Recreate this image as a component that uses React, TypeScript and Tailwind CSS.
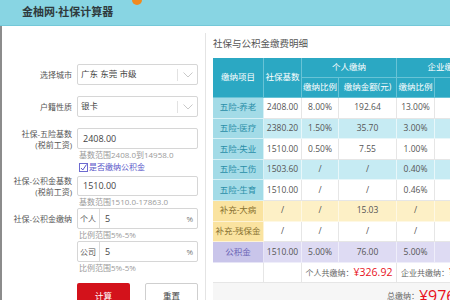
import React from "react";

const font = "font-['Open_Sans','Noto_Sans_CJK_SC',sans-serif]";

type Row = {
  name: string;
  kind: "wx" | "bc" | "gjj";
  alt: boolean;
  cells: string[];
};

// last column (企业缴纳金额) is cut off by the window, so it stays blank
const rows: Row[] = [
  { name: "五险-养老", kind: "wx", alt: false, cells: ["2408.00", "8.00%", "192.64", "13.00%", ""] },
  { name: "五险-医疗", kind: "wx", alt: true, cells: ["2380.20", "1.50%", "35.70", "3.00%", ""] },
  { name: "五险-失业", kind: "wx", alt: false, cells: ["1510.00", "0.50%", "7.55", "1.00%", ""] },
  { name: "五险-工伤", kind: "wx", alt: true, cells: ["1503.60", "/", "/", "0.40%", ""] },
  { name: "五险-生育", kind: "wx", alt: false, cells: ["1510.00", "/", "/", "0.46%", ""] },
  { name: "补充-大病", kind: "bc", alt: true, cells: ["/", "/", "15.03", "/", ""] },
  { name: "补充-残保金", kind: "bc", alt: false, cells: ["/", "/", "/", "/", ""] },
  { name: "公积金", kind: "gjj", alt: true, cells: ["1510.00", "5.00%", "76.00", "5.00%", ""] },
];

const nameCell = {
  wx: "bg-[#a3dbe7] text-[#2a8ea7] border-[#d8f1f6]",
  bc: "bg-[#fae3a0] text-[#87702f] border-[#fdf3d6]",
  gjj: "bg-[#c9c5ea] text-[#6a63b5] border-[#e6e4f6]",
};

const rowBg = (r: Row) => {
  if (!r.alt) return "bg-white border-[#e6e6e6]";
  if (r.kind === "wx") return "bg-[#c6ebf3] border-[#e8f7fa]";
  if (r.kind === "bc") return "bg-[#fdf0c6] border-[#fef8e4]";
  return "bg-[#dedbf3] border-[#efeefa]";
};

const Label = ({ children }: { children: React.ReactNode }) => (
  <div className="w-[70px] shrink-0 text-right text-[8px] leading-[11px] text-[#555]">{children}</div>
);

const Hint = ({ children }: { children: React.ReactNode }) => (
  <div className="pl-[77px] h-[12px] text-[8px] leading-[12px] text-[#9a9a9a]">{children}</div>
);

const Select = ({ value }: { value: string }) => (
  <div className="ml-[5px] w-[121px] h-full border border-[#d6d6d6] rounded-[2px] flex items-center pl-[3px] text-[8.5px] text-[#444]">
    <span className="flex-1">{value}</span>
    <span className="w-px h-[12px] bg-[#e2e2e2]" />
    <svg className="ml-[5px] mr-[4px]" width="10" height="6" viewBox="0 0 10 6">
      <path d="M0.5 0.5 L5 5 L9.5 0.5" fill="none" stroke="#c9c9c9" strokeWidth="1" />
    </svg>
  </div>
);

const Input = ({ value }: { value: string }) => (
  <div className="ml-[5px] w-[121px] h-full border border-[#d6d6d6] rounded-[2px] flex items-center pl-[5px] text-[9px] text-[#444]">
    {value}
  </div>
);

const RateInput = ({ prefix, value }: { prefix: string; value: string }) => (
  <div className="ml-[5px] w-[121px] h-full border border-[#d6d6d6] rounded-[2px] flex items-center text-[9px] text-[#444]">
    <span className="w-[22px] h-full flex items-center pl-[2px] text-[8px] text-[#555] border-r border-[#dcdcdc]">{prefix}</span>
    <span className="flex-1 pl-[5px]">{value}</span>
    <span className="pr-[4px] text-[8px] text-[#777]">%</span>
  </div>
);

const LeftForm = () => (
  <div className="w-[203px] shrink-0 pt-[38px]">
    <div className="flex items-center h-[21px] mb-[11px]">
      <Label>选择城市</Label>
      <Select value="广东 东莞 市级" />
    </div>
    <div className="flex items-center h-[21px] mb-[11px]">
      <Label>户籍性质</Label>
      <Select value="银卡" />
    </div>
    <div className="flex items-center h-[21px]">
      <Label>
        社保-五险基数
        <br />
        (税前工资)
      </Label>
      <Input value="2408.00" />
    </div>
    <Hint>基数范围2408.0到14958.0</Hint>
    <div className="pl-[77px] h-[12px] flex items-center text-[8px] text-[#5956c9] mb-[3px]">
      <svg width="9" height="9" viewBox="0 0 9 9" className="mr-[1px]">
        <rect x="0.5" y="0.5" width="8" height="8" fill="white" stroke="#6d6ad0" strokeWidth="1" />
        <path d="M2 5 L3.8 7 L7.5 1.5" fill="none" stroke="#5956c9" strokeWidth="1" />
      </svg>
      是否缴纳公积金
    </div>
    <div className="flex items-center h-[20px]">
      <Label>
        社保-公积金基数
        <br />
        (税前工资)
      </Label>
      <Input value="1510.00" />
    </div>
    <Hint>基数范围1510.0-17863.0</Hint>
    <div className="flex items-center h-[21px]">
      <Label>社保-公积金缴纳</Label>
      <RateInput prefix="个人" value="5" />
    </div>
    <Hint>比例范围5%-5%</Hint>
    <div className="flex items-center h-[21px]">
      <div className="w-[70px] shrink-0" />
      <RateInput prefix="公司" value="5" />
    </div>
    <Hint>比例范围5%-5%</Hint>
    <div className="flex pl-[75px] mt-[9px] gap-[15px]">
      <button className="w-[53px] h-[26px] bg-[#d3121b] rounded-[2px] text-white text-[8.5px]">计算</button>
      <button className="w-[53px] h-[26px] bg-white border border-[#cfcfcf] rounded-[2px] text-[#444] text-[8.5px]">重置</button>
    </div>
  </div>
);

const head = "bg-[#2ba8c3] text-white border-r border-b border-[#68c3d6] flex items-center justify-center";

const RightPanel = () => (
  <div className="flex-1 min-w-0 mt-[7px] border-l border-[#e4e4e4] pl-[7px]">
    <div className="pt-[5px] h-[25px] text-[9.5px] leading-[12px] text-[#555]">社保与公积金缴费明细</div>
    <div className="grid w-[280px] grid-cols-[51px_38px_37px_58px_38px_58px] grid-rows-[20px_20px_repeat(9,20.6px)_26px] text-[8.5px]">
      <div className={`${head} row-span-2`}>缴纳项目</div>
      <div className={`${head} row-span-2`}>社保基数</div>
      <div className={`${head} col-span-2`}>个人缴纳</div>
      <div className={`${head} col-span-2`}>企业缴纳</div>
      <div className={head}>缴纳比例</div>
      <div className={head}>缴纳金额(元)</div>
      <div className={head}>缴纳比例</div>
      <div className={head} />
      {rows.map((r) => (
        <React.Fragment key={r.name}>
          <div className={`${nameCell[r.kind]} border-r border-b flex items-center justify-center`}>{r.name}</div>
          {r.cells.map((c, i) => (
            <div key={i} className={`${rowBg(r)} border-r border-b flex items-center justify-center text-[#555]`}>
              {c}
            </div>
          ))}
        </React.Fragment>
      ))}
      <div className="border-r border-b border-[#e6e6e6]" />
      <div className="border-r border-b border-[#e6e6e6]" />
      <div className="col-span-2 border-r border-b border-[#e6e6e6] flex items-center justify-center text-[8px] text-[#666]">
        个人共缴纳：<span className="text-[10.5px] text-[#e8111c]">¥326.92</span>
      </div>
      <div className="col-span-2 border-r border-b border-[#e6e6e6] flex items-center justify-center text-[8px] text-[#666]">
        企业共缴纳：<span className="text-[10.5px] text-[#e8111c]">¥649.51</span>
      </div>
      <div className="col-span-6 bg-[#f6f6f6] flex items-center justify-end pr-[15px] text-[8px] text-[#666]">
        总缴纳：<span className="text-[16px] text-[#e8111c]">¥976.43</span>
      </div>
    </div>
  </div>
);

export default function App() {
  return (
    <div className={`relative w-[450px] h-[300px] overflow-hidden bg-white ${font}`}>
      <div className="h-[26px] bg-[#88d5e3] border-b border-[#74c8d8] flex items-center pl-[22px]">
        <span className="text-[11px] font-bold text-[#2f3a3d]">金柚网·社保计算器</span>
      </div>
      <span className="absolute left-[132px] top-[-5px] w-[10px] h-[10px] rounded-full bg-[#f28a1e]" />
      <div className="flex h-[274px] border-l-2 border-[#8c8c8c]">
        <LeftForm />
        <RightPanel />
      </div>
    </div>
  );
}
